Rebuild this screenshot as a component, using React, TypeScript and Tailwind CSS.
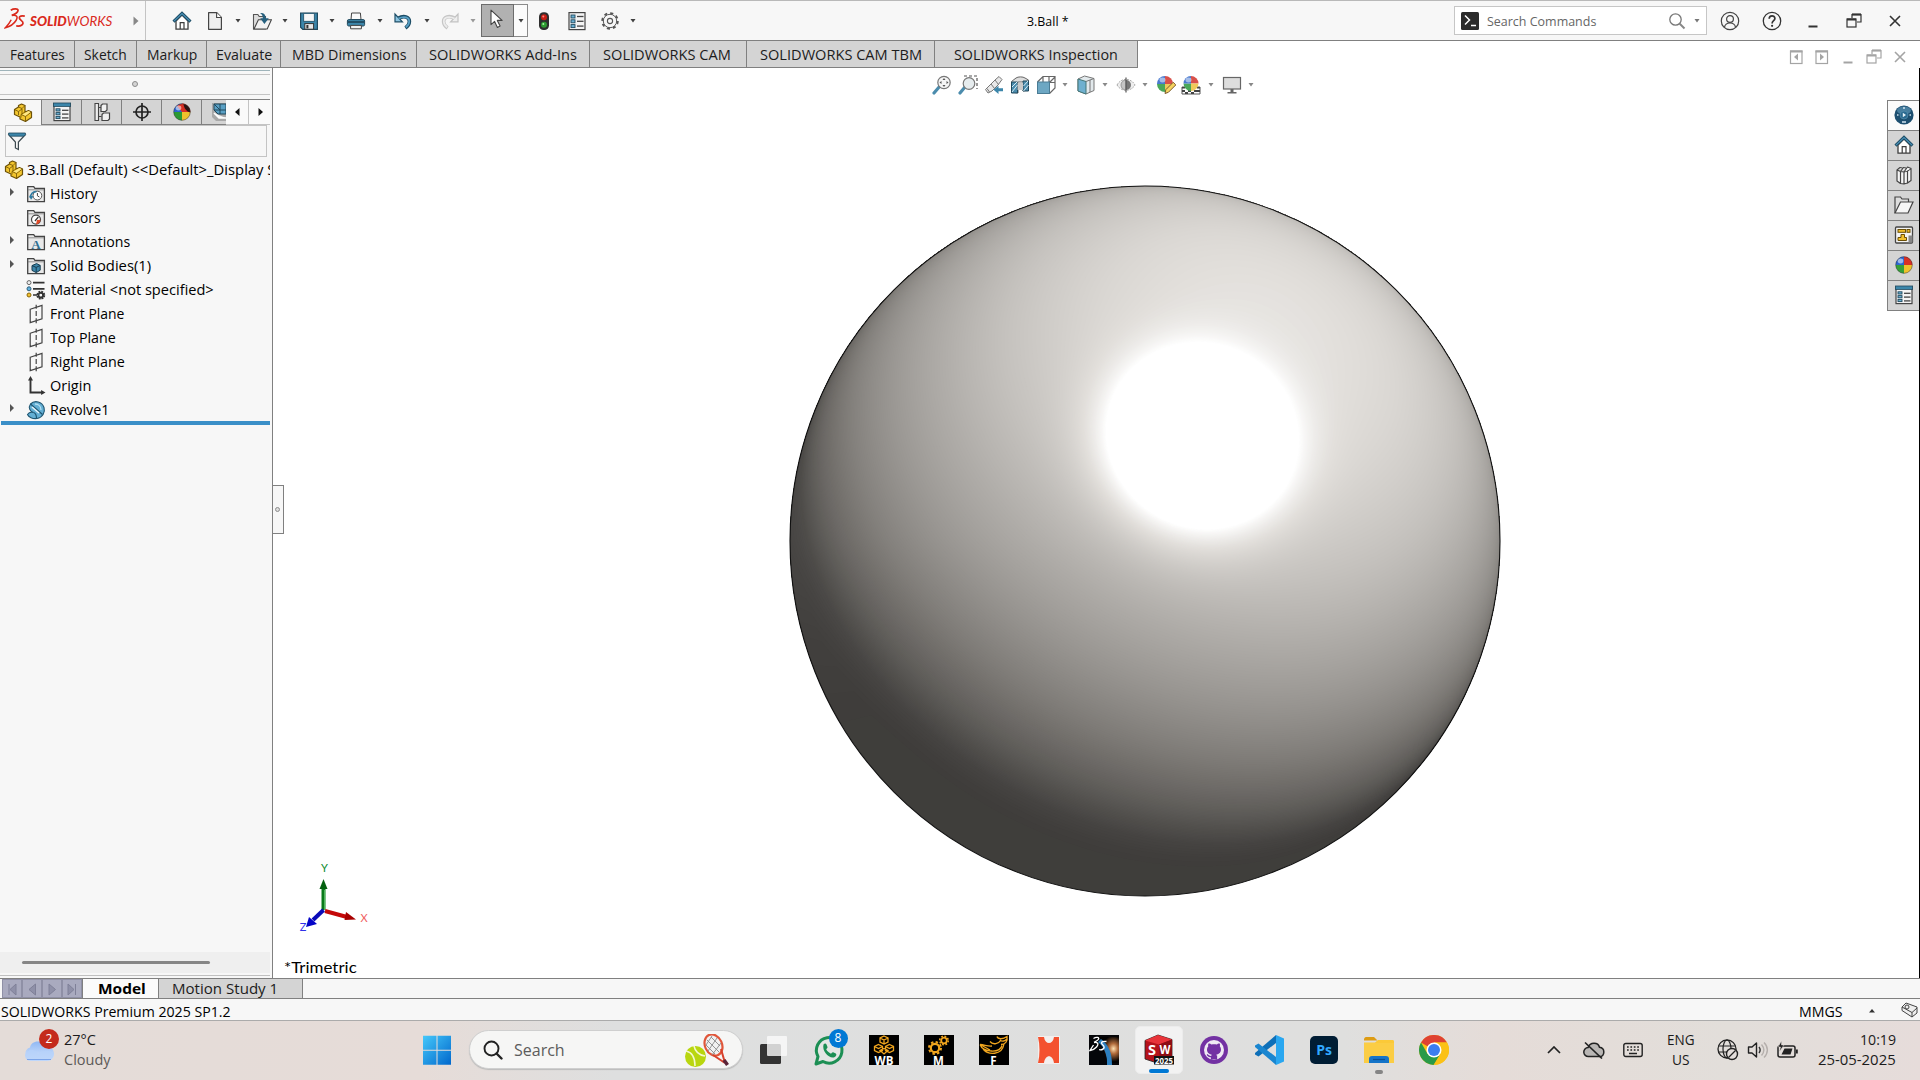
import { useLayoutEffect, useMemo, useRef, useState, type ReactNode } from "react";

/* ---------- text helper: condenses or widens a label to a set width ---------- */
function Label({ w, className = "", children }: { w: number; className?: string; children: ReactNode }) {
  const ref = useRef<HTMLSpanElement>(null);
  const [k, setK] = useState(1);
  useLayoutEffect(() => {
    if (ref.current) setK(w / ref.current.offsetWidth);
  }, [w]);
  return (
    <span className={"block shrink-0 whitespace-nowrap " + className} style={{ width: w }}>
      <span ref={ref} className="inline-block origin-left" style={{ transform: `scaleX(${k})` }}>
        {children}
      </span>
    </span>
  );
}

function Svg({ w = 20, h = 20, className = "", children }: { w?: number; h?: number; className?: string; children: ReactNode }) {
  return (
    <svg width={w} height={h} viewBox={`0 0 ${w} ${h}`} fill="none" className={"shrink-0 " + className}>
      {children}
    </svg>
  );
}

const Caret = ({ color = "#404040" }: { color?: string }) => (
  <Svg w={6} h={4}><path d="M.5 0h5L3 3.4z" fill={color} /></Svg>
);

/* ---------- shaded sphere ---------- */
const R = 355;
/* diffuse response against the cosine between normal and key light */
const RESPONSE: [number, number][] = [
  [-1, 0], [-0.24, 0], [-0.15, 3], [-0.08, 8], [0, 20], [0.1, 37], [0.27, 64], [0.44, 89], [0.6, 112], [0.744, 134], [0.9, 156], [1, 168],
];
function diffuse(c: number) {
  for (let i = 1; i < RESPONSE.length; i++) {
    const [x1, y1] = RESPONSE[i];
    if (c <= x1) {
      const [x0, y0] = RESPONSE[i - 1];
      return y0 + ((c - x0) / (x1 - x0)) * (y1 - y0);
    }
  }
  return 168;
}
function brightness(x: number, y: number) {
  const z = Math.sqrt(Math.max(0, 1 - x * x - y * y));
  const rim = Math.max(0, -x - Math.max(0, y));
  const spec = Math.max(0, 0.155 * x - 0.285 * y + 0.946 * z);
  return 62 + diffuse(0.325 * x - 0.584 * y + 0.744 * z) + 10 * rim * rim + 200 * Math.pow(spec, 42);
}
function shade(v: number) {
  const t = Math.min(1, Math.max(0, (255 - v) / 30)) * Math.min(1, v / 120);
  return `rgb(${Math.round(v)},${Math.round(v - 3 * t)},${Math.round(v - 7 * t)})`;
}
function Sphere() {
  const bands = useMemo(() => {
    const cx = 0.155, cy = -0.285, N = 180, S = 300;
    const rays: { x: number; y: number; b: number }[][] = [];
    for (let i = 0; i < N; i++) {
      const a = (i / N) * Math.PI * 2, ux = Math.cos(a), uy = Math.sin(a);
      const p = cx * ux + cy * uy;
      const len = -p + Math.sqrt(p * p + 1 - cx * cx - cy * cy);
      const ray = [];
      let lo = 999;
      for (let j = 0; j <= S; j++) {
        const t = (j / S) * len, x = cx + ux * t, y = cy + uy * t;
        lo = Math.min(lo, brightness(x, y));
        ray.push({ x, y, b: lo });
      }
      rays.push(ray);
    }
    const out: { d: string; c: string }[] = [];
    for (let v = 63; v <= 255; v += 1) {
      const pts = rays.map((ray) => {
        let j = ray.findIndex((q) => q.b < v);
        if (j < 0) return [ray[S].x * 1.01, ray[S].y * 1.01];
        if (j === 0) j = 1;
        const a = ray[j - 1], b = ray[j];
        const f = a.b === b.b ? 0 : Math.min(1, Math.max(0, (a.b - v) / (a.b - b.b)));
        return [a.x + (b.x - a.x) * f, a.y + (b.y - a.y) * f];
      });
      out.push({ d: "M" + pts.map(([x, y]) => `${(356 + x * R).toFixed(1)} ${(356 + y * R).toFixed(1)}`).join("L") + "Z", c: shade(v) });
    }
    return out;
  }, []);
  return (
    <Svg w={712} h={712}>
      <clipPath id="ball"><circle cx="356" cy="356" r="355" /></clipPath>
      <g clipPath="url(#ball)">
        <rect width="712" height="712" fill="#3f3e3b" />
        {bands.map((b, i) => <path key={i} d={b.d} fill={b.c} />)}
      </g>
      <circle cx="356" cy="356" r="355" stroke="#111" strokeWidth="1.1" />
    </Svg>
  );
}

/* ---------- icons ---------- */
const HomeIcon = () => (
  <Svg>
    <path d="M4 10v8.2h12V10L10 4z" fill="#fff" stroke="#3d3d3d" strokeWidth="1.3" />
    <path d="M8.2 18v-6.3h3.8V18" stroke="#3d3d3d" strokeWidth="1.2" />
    <path d="M1.500 10.600 10 2.400l8.500 8.200" stroke="#1d4d66" strokeWidth="3" />
    <path d="M2 10.200 10 2.600l8 7.600" stroke="#4b92b8" strokeWidth="1.100" />
  </Svg>
);
const NewIcon = () => (
  <Svg><path d="M3.600 1.700h8.200l4.600 4.600v12H3.600z" fill="#efefef" stroke="#444" strokeWidth="1.200" strokeLinejoin="round" /><path d="M11.600 1.800v4.700h4.700" fill="#fff" stroke="#444" strokeWidth="1.100" /></Svg>
);
const OpenIcon = () => (
  <Svg>
    <path d="M1.500 18V3.500h4.300l1.400 2h6.300V18z" fill="#dcdcdc" stroke="#555" strokeWidth="1.100" />
    <path d="M2 18 6.400 8.800h13L15.200 18z" fill="#f2f2f2" stroke="#444" strokeWidth="1.100" />
    <path d="M8 2c3.300-.6 5.600 1 5.800 5.200h3L12.400 13 8.200 7.200h2.600C11 5 10 3.400 8 2z" fill="#27617f" />
  </Svg>
);
const SaveIcon = () => (
  <Svg>
    <path d="M1.600 2h16.800v16.400H3.800l-2.200-2.200z" fill="#3c86aa" stroke="#20485c" strokeWidth="1.200" />
    <rect x="4.600" y="2.400" width="10.800" height="8" fill="#f7f7f7" stroke="#2e5e76" />
    <rect x="5.800" y="12.600" width="8.800" height="5.600" fill="#e8e8e8" stroke="#333" />
    <rect x="7.400" y="14" width="2" height="3.400" fill="#333" />
  </Svg>
);
const PrintIcon = () => (
  <Svg>
    <path d="M5 8.600 5.600 2h8.800L15 8.600z" fill="#fafafa" stroke="#444" />
    <rect x="1.400" y="8.600" width="17.200" height="6.400" rx="1.400" fill="#3c86aa" stroke="#20485c" />
    <path d="M2 11h16" stroke="#17394a" strokeWidth="1.400" />
    <path d="M4.600 14.400h10.800v3.400H4.600z" fill="#f2f2f2" stroke="#444" />
  </Svg>
);
const UndoIcon = () => (
  <Svg>
    <path d="M5 7.400c6-3.400 11.600-1.600 11.400 3.400-.1 2.600-1.600 4.600-4 6.200" stroke="#1d4d66" strokeWidth="3.600" />
    <path d="M2 3v7.800h7.400z" fill="#8cc4e0" stroke="#1d4d66" strokeWidth="1.200" />
    <path d="M5.400 7.600c5.600-3 11-1.400 10.800 3 0 2.200-1.400 4.200-3.400 5.600" stroke="#58a0c6" strokeWidth="1.700" />
  </Svg>
);
const RedoIcon = () => (
  <Svg>
    <path d="M15 7.400C9 4 3.400 5.800 3.600 10.800c.1 2.600 1.600 4.600 4 6.200" stroke="#c6c6c6" strokeWidth="3.600" />
    <path d="M18 3v7.800h-7.400z" fill="#eee" stroke="#c2c2c2" strokeWidth="1.200" />
    <path d="M14.600 7.600c-5.600-3-11-1.400-10.800 3 0 2.200 1.400 4.200 3.400 5.600" stroke="#ececec" strokeWidth="1.700" />
  </Svg>
);
const CursorIcon = () => (
  <Svg><path d="M5 1.200v14.400l3.600-3.200 2.800 6 2.700-1.300-2.800-5.700h4.800z" fill="#fff" stroke="#444" strokeWidth="1.100" strokeLinejoin="round" /></Svg>
);
const TrafficIcon = () => (
  <Svg>
    <rect x="5" y="1.200" width="10" height="17.800" rx="4.600" fill="#2e2e2e" />
    <circle cx="10" cy="6.200" r="3" fill="#c81e14" /><circle cx="9.300" cy="5.400" r="1" fill="#ff8a80" />
    <circle cx="10" cy="13.800" r="3" fill="#2c9a30" /><circle cx="9.300" cy="13" r="1" fill="#a6efa0" />
  </Svg>
);
const ListIcon = ({ header = false }: { header?: boolean }) => (
  <Svg>
    <rect x="2" y="1.600" width="16" height="17" fill="#f4f4f4" stroke="#444" strokeWidth="1.200" />
    {header && <rect x="1.400" y="1" width="17.200" height="3.400" fill="#3c86aa" stroke="#20485c" strokeWidth=".8" />}
    {(header ? [6.800, 10.600, 14.400] : [4, 8.800, 13.600]).map((y) => (
      <g key={y}>
        <rect x="4" y={y} width="4" height={header ? 2.200 : 3} fill="#6bb1d4" stroke="#20485c" strokeWidth=".9" />
        <path d={`M10 ${y + 1.500}h6.500`} stroke="#444" strokeWidth="1.300" />
      </g>
    ))}
  </Svg>
);
const GearIcon = () => (
  <Svg>
    <circle cx="10" cy="10" r="7.800" stroke="#555" strokeWidth="1.900" strokeDasharray="3.100 3.020" />
    <circle cx="10" cy="10" r="6.700" fill="#f7f7f7" stroke="#555" strokeWidth="1" />
    <circle cx="10" cy="10" r="2.600" stroke="#555" strokeWidth="1.100" />
  </Svg>
);
const PartIcon = () => (
  <Svg>
    <path d="M1.500 6.500 5.500 4V2.500L8.500 1 12 2.500V9l3.500-1.500L18.500 9v5.500L12.500 18.500 7 16v-2L1.500 11.500z" fill="#f3c62f" stroke="#6d5208" strokeWidth="1.200" strokeLinejoin="round" />
    <path d="M12 9 8 11.500v3M8 11.500l4.500 2v4.500M12.500 13.500l6-4.500M1.500 6.500 5.500 8.500V12M5.500 8.500 9 6M5.500 4 9 5.500V11M9 5.500l3-3" stroke="#7d5e08" strokeWidth=".9" />
    <path d="M9.500 11.500 15.500 8l2 1-5 3.700z" fill="#fde88a" />
  </Svg>
);
const ConfigIcon = () => (
  <Svg>
    <path d="M3 1.500h3.500v17H3z" fill="#eee" stroke="#444" strokeWidth="1.100" />
    <path d="M6.500 5.500h3M6.500 14.500h3" stroke="#444" strokeWidth="1.200" />
    <path d="M9 3.500 10.500 2h4.500v6l-1.500 1.500H9z" fill="#f2f2f2" stroke="#444" strokeWidth="1.200" />
    <path d="M10 12.500l1.500-1.500h6v6L16 18.500h-6z" fill="#f2f2f2" stroke="#444" strokeWidth="1.200" />
  </Svg>
);
const TargetIcon = () => (
  <Svg><circle cx="10" cy="10" r="6" stroke="#222" strokeWidth="1.700" /><path d="M10 1v18M1 10h18" stroke="#222" strokeWidth="1.700" /></Svg>
);
const BallIcon = ({ dark = false }: { dark?: boolean }) => (
  <Svg>
    <path d="M10 10V1.600A8.400 8.400 0 0 1 18.400 10z" fill="#d83025" />
    <path d="M10 10h8.400A8.400 8.400 0 0 1 10 18.400z" fill="#efc22c" />
    <path d="M10 10v8.400A8.400 8.400 0 0 1 1.600 10z" fill={dark ? "#2c9a34" : "#36a038"} />
    <path d="M10 10H1.600A8.400 8.400 0 0 1 10 1.600z" fill="#2d66d0" />
    {dark && <><path d="M10 10 5 4a8.400 8.400 0 0 1 7-2.200z" fill="#d83025" /><path d="M11.500 2c4.500 1 7 4 6.800 8.500C14.500 9.500 12 6.500 11.500 2z" fill="#2a1414" /></>}
    <ellipse cx="6.500" cy="6" rx="2.800" ry="2.400" fill="#fff" opacity=".55" />
    <circle cx="10" cy="10" r="8.300" stroke="#3339" strokeWidth=".8" />
  </Svg>
);
const DimIcon = () => (
  <Svg w={14}>
    <path d="M0 1h14v18H4L0 15z" fill="#a8a8a8" />
    <path d="M2 2h12v10H6L2 8z" fill="#5aa0c4" stroke="#20485c" />
    <path d="m2 2 6 6h6M8 2v10M2 8h6" stroke="#20485c" />
    <path d="m2 11 5 5h7" fill="#f4f4f4" stroke="#fff" strokeWidth="1.500" />
  </Svg>
);
const FunnelIcon = () => (
  <Svg>
    <path d="m2 4 6.400 7v6l3 1.500V11L18 4z" fill="#f4f4f4" stroke="#3d4a50" strokeWidth="1.200" />
    <path d="M1.600 2h16.800v1.800l-1.400 1.400H3L1.600 3.800z" fill="#3c86aa" stroke="#20485c" strokeWidth=".8" />
  </Svg>
);
const Folder = ({ children }: { children: ReactNode }) => (
  <Svg>
    <path d="M1.700 17.600V2.600h6l1.200 1.800h9.500v13.200z" fill="#e9e9e9" stroke="#444" strokeWidth="1.300" />
    <path d="M2 5.800h16" stroke="#777" strokeWidth=".8" />
    {children}
  </Svg>
);
const HistoryIcon = () => (
  <Folder><circle cx="11.400" cy="11.600" r="4.400" fill="#fff" stroke="#555" /><path d="M11.400 9v2.800l2 1.200" stroke="#444" /><path d="M4.400 14c0-4 2.400-6.500 6-6.300" stroke="#2f7aa0" strokeWidth="1.700" /><path d="m3 11.800 4.500.4-2.500 3.600z" fill="#2f7aa0" /></Folder>
);
const SensorIcon = () => (
  <Folder><circle cx="10" cy="11.600" r="4.500" fill="#fff" stroke="#444" strokeWidth="1.200" /><path d="m9 13 3.300-4" stroke="#333" strokeWidth="1.200" /><path d="M10 16.200a4.500 4.500 0 0 0 4.500-4.500L11 12z" fill="#e04a28" /></Folder>
);
const AnnotIcon = () => (
  <Folder><text x="10" y="16.500" textAnchor="middle" fontSize="13" fontWeight="700" fontFamily="Liberation Serif, serif" fill="#2f6f92">A</text></Folder>
);
const SolidIcon = () => (
  <Folder><path d="m6 9.600 4.600-2 3.600 1.800v4.800l-4 2.400L6 14.400z" fill="#3c86aa" stroke="#173c50" /><path d="m6 9.600 4.200 1.800 4-2M10.200 11.400v5" stroke="#173c50" /></Folder>
);
const MaterialIcon = () => (
  <Svg>
    <circle cx="3" cy="2.600" r="2" fill="#eee" stroke="#666" /><circle cx="3" cy="8.800" r="2" fill="#62b0dc" stroke="#2a5d7c" /><circle cx="3" cy="15" r="2" fill="#f2c12e" stroke="#8a6608" />
    <path d="M7 2.600h11.500M7 8.800h11.500M7 15h4" stroke="#333" strokeWidth="1.700" />
    <circle cx="14.800" cy="15.200" r="3.200" stroke="#333" strokeWidth="2.400" strokeDasharray="1.700 .81" /><circle cx="14.800" cy="15.200" r="2.300" stroke="#333" strokeWidth="1.800" />
  </Svg>
);
const PlaneIcon = () => (
  <Svg><path d="M4.200 5.200 16 1.400v13.400L4.200 18.600z" stroke="#444" strokeWidth="1.200" /><path d="M10.200.800v4M10.200 7v5M10.200 14.200v5" stroke="#444" strokeWidth="1.200" /></Svg>
);
const OriginIcon = () => (
  <Svg><path d="M4.500 3v13.500H17" stroke="#333" strokeWidth="1.900" /><path d="M4.500 0 7 4.400H2zM19.500 16.500l-4.400 2.500v-5z" fill="#333" /></Svg>
);
const RevolveIcon = () => (
  <Svg>
    <path d="M4.500 4C9-.5 16 2 18 7.500c1.500 5-1.500 10-7 11-4.500.6-8.500-1.500-9.500-4 1.500-2.200 4-2.500 6-2C4 11.500 2 7.500 4.500 4z" fill="#63afd4" stroke="#1f5672" strokeWidth="1.100" />
    <path d="M4.500 4 16.500 14.500M7.500 12.500c2 .5 3 2 3 6" stroke="#1f5672" strokeWidth="1.200" /><path d="m6 7 7 6" stroke="#e8f5fb" strokeWidth="1.500" /><path d="M9 4c3.500 0 6 2.500 6 6" stroke="#b5dff2" strokeWidth="1.300" />
  </Svg>
);
const UserIcon = () => (
  <Svg><circle cx="10" cy="10" r="8.700" stroke="#444" strokeWidth="1.200" /><circle cx="10" cy="8" r="3.400" stroke="#444" strokeWidth="1.200" /><path d="M4.500 16.200c.5-3 2.500-4.200 5.500-4.200s5 1.200 5.500 4.200" stroke="#444" strokeWidth="1.200" /></Svg>
);
const HelpIcon = () => (
  <Svg><circle cx="10" cy="10" r="8.700" stroke="#333" strokeWidth="1.300" /><path d="M7.200 7.800c0-4 5.700-3.700 5.700-.4 0 2.300-2.800 2.300-2.800 5" stroke="#333" strokeWidth="1.700" /><circle cx="10.100" cy="14.800" r="1.100" fill="#333" /></Svg>
);
const MinIcon = ({ c = "#333" }: { c?: string }) => <Svg><path d="M5.500 15.500h9" stroke={c} strokeWidth="2" /></Svg>;
const RestoreIcon = ({ c = "#333" }: { c?: string }) => (
  <Svg><path d="M8 7V3.500h9V11h-4" stroke={c} strokeWidth="1.200" /><path d="M8 3.500h9" stroke={c} strokeWidth="2.200" /><rect x="3" y="8" width="9" height="8" stroke={c} strokeWidth="1.200" /><path d="M3 8.500h9" stroke={c} strokeWidth="2" /></Svg>
);
const CloseIcon = ({ c = "#333" }: { c?: string }) => <Svg><path d="m5 5 10 10M15 5 5 15" stroke={c} strokeWidth="1.600" /></Svg>;
const DockIcon = ({ flip = false }: { flip?: boolean }) => (
  <Svg className={flip ? "-scale-x-100" : ""}><rect x="4.500" y="4" width="11.500" height="12.500" stroke="#a4a4a4" strokeWidth="1.200" /><path d="M4 4.500h12.500" stroke="#a4a4a4" strokeWidth="2" /><path d="M12 6.500v7L8 10z" fill="#a4a4a4" /></Svg>
);

/* heads-up view toolbar */
const ZoomFit = () => (
  <Svg><path d="m2 18 6-7" stroke="#4b8cad" strokeWidth="3.200" strokeLinecap="round" /><circle cx="12" cy="7.500" r="6.200" fill="#f5f5f5" stroke="#777" strokeWidth="1.200" /><path d="M12 3l1.500 2h-3zM12 12l1.500-2h-3zM7.500 7.500l2-1.500v3zM16.500 7.500l-2-1.500v3z" fill="#555" /></Svg>
);
const ZoomArea = () => (
  <Svg><path d="M6 1h13v13" stroke="#555" strokeWidth="1.200" strokeDasharray="3 2" /><path d="m2 18 5-6" stroke="#4b8cad" strokeWidth="3.200" strokeLinecap="round" /><circle cx="11" cy="8.500" r="5.800" fill="#e6ecee" stroke="#777" strokeWidth="1.200" /></Svg>
);
const PrevView = () => (
  <Svg><path d="M1.500 14.500 4 18l4-2 6-6 4-5.500-3-3L11 5z" fill="#e8e8e8" stroke="#777" /><path d="m11 5 3.500 4.500M7 9l3.500 4.500M3 13.500 5.500 17" stroke="#777" /><path d="m9.500 14.800 5-4v2.500H19v3h-4.500V19z" fill="#3c86aa" /></Svg>
);
const SectionView = () => (
  <Svg><path d="M1.500 6.500 6 3c2-1.500 7-1.500 9 0l3.500 2v10L13 16V7H8v11l-6.500-1z" fill="#ddd" stroke="#666" /><path d="M1.500 7H7.500v11H1.500zM13 6h5.500v10H13z" fill="#4b8cad" stroke="#20485c" /><path d="m2 12 5-5M2 17l5.500-7M13.500 11l4.500-5M13.500 16l5-6" stroke="#d7ecf5" /><path d="M7.500 7.500h5.500V15H7.500z" fill="#c9c9c9" /></Svg>
);
const OrientIcon = () => (
  <Svg><path d="M1.500 7 7 1.500h12V13l-5.500 5.500M7 1.500V7M13 1.500V7M19 7.500h-5.500L19 2" stroke="#666" strokeWidth="1.200" /><rect x="1.500" y="7" width="12" height="11.500" fill="#6da7c3" stroke="#4a7c95" /></Svg>
);
const DisplayIcon = () => (
  <Svg><path d="M2 4 8.500 1 18 3.500v12L10 19l-8-3z" fill="#e2e9ec" stroke="#777" /><path d="m2 4 8 2.500V19l-8-3z" fill="#6fb0cf" stroke="#477" /><path d="m10 6.500 8-3M14 5v12" stroke="#777" /></Svg>
);
const EyeIcon = () => (
  <Svg><path d="M1 10c4-7.500 14-7.500 18 0-4 7-14 7-18 0z" fill="#eee" stroke="#aaa" strokeDasharray="2 1" /><path d="M5 10a5 5 0 0 1 5-5v10a5 5 0 0 1-5-5z" fill="#c5c5c5" stroke="#999" /><path d="M15 10a5 5 0 0 1-5 5V5a5 5 0 0 1 5 5z" fill="#777" /><path d="M10 2.500v15" stroke="#555" strokeWidth="1.200" /></Svg>
);
const AppearanceIcon = () => (
  <Svg><path d="M9 9V1a8 8 0 0 1 8 8z" fill="#d8504a" /><path d="M9 9h8a8 8 0 0 1-8 8z" fill="#efc95a" /><path d="M9 9v8a8 8 0 0 1-8-8z" fill="#4aa85a" /><path d="M9 9H1a8 8 0 0 1 8-8z" fill="#4a7ad0" /><ellipse cx="6.500" cy="5" rx="3" ry="2.400" fill="#fff" opacity=".5" /><path d="m9 18.500.8-3.800 7.400-7.400 2.600 2.600-7.400 7.400z" fill="#f6d460" stroke="#7a5a2a" /></Svg>
);
const SceneIcon = () => (
  <Svg><path d="M1 12h18v7H1z" fill="#fff" stroke="#555" /><path d="M1 15h3v2H1zM16 15h3v2h-3zM4 17h3v2H4zM10 17h3v2h-3zM7 15h3v2H7zM13 15h3v2h-3zM1 12h3v1.500H1zM16 12h3v1.500h-3z" fill="#444" /><path d="M10 8.500V1a7.500 7.500 0 0 1 7.500 7.500z" fill="#d8504a" /><path d="M10 8.500h7.500A7.500 7.500 0 0 1 10 16z" fill="#efc95a" /><path d="M10 8.500V16a7.500 7.500 0 0 1-7.500-7.500z" fill="#4aa85a" /><path d="M10 8.500H2.500A7.500 7.500 0 0 1 10 1z" fill="#4a7ad0" /><ellipse cx="7.500" cy="5" rx="3" ry="2.400" fill="#fff" opacity=".5" /></Svg>
);
const MonitorIcon = () => (
  <Svg><rect x="1.500" y="2.500" width="17" height="11.500" fill="#ddd" stroke="#666" strokeWidth="1.200" /><path d="M8.500 14h3v3h3v1.500h-9V17h3z" fill="#666" /></Svg>
);

/* task pane */
const CompassIcon = () => (
  <Svg><circle cx="10" cy="10" r="9.600" fill="#1d4f70" /><ellipse cx="10" cy="5.500" rx="7" ry="4" fill="#5a93b4" opacity=".7" /><circle cx="10" cy="10" r="4" fill="#2b6a90" stroke="#5f95b4" strokeWidth=".6" /><path d="M8.800 7.800v4.400l3.200-2.200z" fill="#e8f3f8" /><path d="M8 17h4M3 10h1.500M15.500 10H17M9 3h2" stroke="#cfe4ef" strokeWidth="1.300" /></Svg>
);
const BooksIcon = () => (
  <Svg>
    <path d="M3 5 6.500 6.500V18.500L3 16zM6.500 6.500 10 7v12l-3.500-.5zM10 7l3.500-1v12L10 19zM13.500 6 17 3.500v12L13.500 18z" fill="#f6f6f6" stroke="#444" strokeWidth="1.200" strokeLinejoin="round" />
    <path d="M3 5 6 2.500l2.500.5M6.500 6.500 9.500 2.500l2.500.5M10 7l3.500-5 3.500 1.500" fill="#fff" stroke="#444" strokeWidth="1.200" strokeLinejoin="round" />
  </Svg>
);
const FolderOpen = () => (
  <Svg><path d="M1 18V2h5.500l1.500 2h6.500v3" fill="#ddd" stroke="#444" strokeWidth="1.200" /><path d="M1 18 6.500 7H19l-5 11z" fill="#f6f6f6" stroke="#444" strokeWidth="1.200" /></Svg>
);
const PaletteIcon = () => (
  <Svg><rect x="1.500" y="2" width="17" height="16" rx="1" fill="#f4f4f4" stroke="#444" strokeWidth="1.300" /><rect x="4" y="4.500" width="7.500" height="2.800" fill="#f2c12e" stroke="#6b4f05" /><rect x="13" y="4.500" width="3" height="2.800" fill="#f2c12e" stroke="#6b4f05" /><path d="M4 15.500v-3h3V9.500h3.500v3h2v3z" fill="#f2c12e" stroke="#6b4f05" /><path d="M14.500 17.500v-7h4v7z" fill="#888" /></Svg>
);

/* ---------- title bar ---------- */
function BrandLogo() {
  return (
    <Svg w={22} h={22}>
      <path d="M6.800 2.200C9.500.4 14.300.3 14 2.600c-.3 2-3.200 3.600-6.200 4.700" stroke="#da291c" strokeWidth="1.700" />
      <path d="M7.800 7.500c4.800-.9 6.600 1 4.200 5-1.800 3-5.600 5.800-10.600 7.200 2.400-2.600 4.500-5.200 5.800-8" stroke="#da291c" strokeWidth="1.500" />
      <path d="M20.800 8.200c-3.300-.7-5.600 0-5.500 1.700.1 2.200 4.300 3 3.700 5.400-.5 2-3.500 3-6.800 2.600" stroke="#da291c" strokeWidth="1.700" />
    </Svg>
  );
}
const Cell = ({ w, children }: { w: string; children?: ReactNode }) => (
  <div className={"flex h-full shrink-0 items-center justify-center " + w}>{children}</div>
);

function TitleBar() {
  return (
    <header className="flex h-[41px] shrink-0 items-center border-t border-b border-t-[#b9b9b9] border-b-[#808080] bg-[#f7f7f7]">
      <div className="flex h-full w-[146px] items-center border-r border-[#c4c4c4] pl-[4px]">
        <div className="-mt-[4px]"><BrandLogo /></div>
        <Label w={82} className="ml-[4px] font-['Lato'] text-[14px] leading-5 italic text-[#da291c]">
          <b className="font-black">SOLID</b>WORKS
        </Label>
        <Svg w={6} h={10} className="ml-[21px]"><path d="M.500.500v9L5.500 5z" fill="#888" /></Svg>
      </div>
      <Cell w="ml-5 w-8"><HomeIcon /></Cell>
      <Cell w="w-[34px]"><NewIcon /></Cell>
      <Cell w="w-3"><Caret /></Cell>
      <Cell w="w-9"><OpenIcon /></Cell>
      <Cell w="w-2.5"><Caret /></Cell>
      <Cell w="w-[38px]"><SaveIcon /></Cell>
      <Cell w="w-2"><Caret /></Cell>
      <Cell w="w-10"><PrintIcon /></Cell>
      <Cell w="w-2"><Caret /></Cell>
      <Cell w="w-[38px]"><UndoIcon /></Cell>
      <Cell w="w-2.5"><Caret /></Cell>
      <Cell w="w-9"><RedoIcon /></Cell>
      <Cell w="w-2.5"><Caret color="#999" /></Cell>
      <div className="ml-[3px] flex h-[33px]">
        <div className="flex w-[33px] items-center justify-center border border-[#6c6c6c] bg-[#b1b1b1] pr-1 pb-1"><CursorIcon /></div>
        <div className="flex w-[14px] items-center justify-center border border-l-0 border-[#8a8a8a] bg-[#fbfbfb]"><Caret /></div>
      </div>
      <Cell w="w-8"><TrafficIcon /></Cell>
      <Cell w="w-[34px]"><ListIcon /></Cell>
      <Cell w="w-8"><GearIcon /></Cell>
      <Cell w="w-[14px]"><Caret /></Cell>
      <Label w={42} className="ml-[387px] text-[13px] leading-5 text-black">3.Ball *</Label>
      <div className="ml-auto flex h-[29px] w-[253px] items-center border border-[#c6c6c6] bg-white pl-[6px]">
        <Svg w={18} h={18}><rect width="18" height="18" rx="1.500" fill="#2b2b2b" /><path d="m4 3.500 4.500 4.500L4 12.500M10 13.500h5" stroke="#fff" strokeWidth="1.500" /></Svg>
        <Label w={109} className="ml-[8px] text-[13.5px] leading-5 text-[#666]">Search Commands</Label>
        <Svg w={18} h={18} className="ml-[72px]"><circle cx="7.500" cy="7.500" r="5.700" stroke="#777" strokeWidth="1.300" /><path d="m11.500 11.500 5 5" stroke="#888" strokeWidth="2" /></Svg>
        <div className="ml-[8px]"><Caret color="#777" /></div>
      </div>
      <Cell w="w-[46px]"><UserIcon /></Cell>
      <Cell w="w-[37px]"><HelpIcon /></Cell>
      <Cell w="w-[45px]"><MinIcon /></Cell>
      <Cell w="w-[37px]"><RestoreIcon /></Cell>
      <Cell w="mr-[2px] w-[46px]"><CloseIcon /></Cell>
    </header>
  );
}

const RIBBON: [string, number, string][] = [
  ["Features", 55, "w-[75px]"],
  ["Sketch", 43, "w-[62px]"],
  ["Markup", 50, "w-[70px]"],
  ["Evaluate", 56, "w-[74px]"],
  ["MBD Dimensions", 114, "w-[136px]"],
  ["SOLIDWORKS Add-Ins", 148, "w-[173px]"],
  ["SOLIDWORKS CAM", 128, "w-[157px] pr-[3px]"],
  ["SOLIDWORKS CAM TBM", 162, "w-[188px]"],
  ["SOLIDWORKS Inspection", 164, "w-[203px]"],
];
function Ribbon() {
  return (
    <nav className="flex h-[27px] shrink-0 items-center bg-white">
      {RIBBON.map(([t, w, cls]) => (
        <div key={t} className={"flex h-full shrink-0 items-center justify-center border-r border-b border-[#808080] bg-[#d4d4d4] pt-px " + cls}>
          <Label w={w} className="text-[14.5px] leading-5 text-[#1c1c1c]">{t}</Label>
        </div>
      ))}
      <div className="mt-[4px] ml-auto flex gap-[6px] pr-[10px]">
        <DockIcon /><DockIcon flip /><MinIcon c="#a4a4a4" /><RestoreIcon c="#a4a4a4" /><CloseIcon c="#a4a4a4" />
      </div>
    </nav>
  );
}

/* ---------- feature manager ---------- */
const TREE: [string, number, () => ReactNode, boolean][] = [
  ["History", 47, HistoryIcon, true],
  ["Sensors", 50, SensorIcon, false],
  ["Annotations", 80, AnnotIcon, true],
  ["Solid Bodies(1)", 101, SolidIcon, true],
  ["Material <not specified>", 164, MaterialIcon, false],
  ["Front Plane", 74, PlaneIcon, false],
  ["Top Plane", 66, PlaneIcon, false],
  ["Right Plane", 75, PlaneIcon, false],
  ["Origin", 41, OriginIcon, false],
  ["Revolve1", 59, RevolveIcon, true],
];
function FeatureTree() {
  const tabs = [<ListIcon key="l" header />, <ConfigIcon key="c" />, <TargetIcon key="t" />, <BallIcon key="b" dark />];
  return (
    <aside className="flex w-[273px] shrink-0 flex-col border-r border-[#808080] bg-[#f7f7f7] pr-[2px]">
      <div className="mt-[2px] h-px shrink-0 bg-[#9fb4ba]" />
      <div className="mt-[3px] flex h-[21px] shrink-0 items-center justify-center border-t border-b border-[#c4c4c4]">
        <div className="mb-[2px] h-[6px] w-[6px] rounded-full border border-[#8c8c8c] bg-[#d4d4d4]" />
      </div>
      <div className="mt-[4px] flex h-[26px] shrink-0 border-t border-[#808080]">
        <div className="flex w-[41px] items-center justify-center pl-[4px]"><PartIcon /></div>
        {tabs.map((t, i) => (
          <div key={i} className="flex w-10 items-center justify-center border-b border-l border-[#808080] bg-[#d4d4d4]">{t}</div>
        ))}
        <div className="flex w-[25px] items-center justify-end border-b border-l border-[#808080] bg-[#d4d4d4]"><DimIcon /></div>
        <div className="flex w-[23px] items-center justify-center border-r border-b border-[#c4c4c4] bg-[#fafafa]"><Svg w={5} h={8}><path d="M4.500 0v8L0 4z" fill="#111" /></Svg></div>
        <div className="flex flex-1 items-center justify-center border-b border-[#c4c4c4] bg-[#fafafa] pl-px"><Svg w={5} h={8}><path d="M.500 0v8L5 4z" fill="#111" /></Svg></div>
      </div>
      <div className="mr-[3px] ml-[5px] flex h-[32px] shrink-0 items-center border border-[#c4c4c4] pl-px"><FunnelIcon /></div>
      <div className="mt-px flex h-6 shrink-0 items-center overflow-hidden pl-[4px]">
        <div className="shrink-0"><PartIcon /></div>
        <Label w={248} className="ml-[3px] text-[14.5px] leading-6 text-black">3.Ball (Default) &lt;&lt;Default&gt;_Display S</Label>
      </div>
      {TREE.map(([t, w, Icon, open]) => (
        <div key={t} className="flex h-6 shrink-0 items-center pl-[9px]">
          <Svg w={6} h={8} className="mr-[11px] mb-1">{open && <path d="M1 0v8l4-4z" fill="#555" />}</Svg>
          <Icon />
          <Label w={w} className="ml-[4px] text-[14.5px] leading-6 text-black">{t}</Label>
        </div>
      ))}
      <div className="-mt-px ml-px h-[4px] shrink-0 bg-[#3a8fc8]" />
      <div className="flex-1" />
      <div className="flex h-[21px] shrink-0 items-center bg-[#efefef] pl-[22px]"><div className="h-[3px] w-[188px] rounded-full bg-[#868686]" /></div>
      <div className="mt-[2px] mb-[2px] h-px shrink-0 bg-[#c0c0c0]" />
    </aside>
  );
}

/* ---------- viewport ---------- */
function Viewport() {
  const tools: [ReactNode, string][] = [
    [<ZoomFit />, "w-[26px]"], [<ZoomArea />, "w-[26px]"], [<PrevView />, "w-[26px]"], [<SectionView />, "w-[26px]"], [<OrientIcon />, "w-[26px]"],
    [<Caret color="#888" />, "w-[12px]"], [<DisplayIcon />, "w-[29px]"], [<Caret color="#888" />, "w-[10px]"], [<EyeIcon />, "w-[31px]"],
    [<Caret color="#888" />, "w-[8px]"], [<AppearanceIcon />, "w-[34px]"], [<SceneIcon />, "w-[16px]"], [<Caret color="#888" />, "w-[24px]"],
    [<MonitorIcon />, "w-[18px]"], [<Caret color="#888" />, "w-[20px]"],
  ];
  const pane = [<CompassIcon />, <HomeIcon />, <BooksIcon />, <FolderOpen />, <PaletteIcon />, <BallIcon />, <ListIcon header />];
  return (
    <main className="relative flex-1 overflow-hidden border-r border-black bg-white">
      <div className="flex h-[34px] items-center pl-[656px]">
        {tools.map(([icon, w], i) => <Cell key={i} w={w}>{icon}</Cell>)}
      </div>
      <div className="absolute top-[417px] left-0 flex h-[49px] w-[11px] items-center justify-center border border-l-0 border-[#808080] bg-[#f7f7f7] pr-px">
        <div className="h-[5px] w-[5px] rounded-full border border-[#8c8c8c] bg-[#ddd]" />
      </div>
      <div className="absolute top-[117px] left-[516px]"><Sphere /></div>
      <div className="absolute top-[791px] left-[19px]">
        <Svg w={85} h={80}>
          <path d="M31.500 51V30" stroke="#0a7a1a" strokeWidth="4" /><path d="M32.800 51V31" stroke="#6fd07c" strokeWidth="1" />
          <path d="M31.500 20 27.500 30h8z" fill="#046010" />
          <path d="m33 52 22 6" stroke="#c40808" strokeWidth="4" /><path d="m64 60.500-10-7.500-1.500 8z" fill="#a80000" />
          <path d="M31.500 51 21 61" stroke="#0a0ab8" strokeWidth="4" /><path d="m14 68 3-10 8 7z" fill="#0404c8" />
          <text x="32.500" y="13" textAnchor="middle" fontSize="11" fill="#0a8a2a" fontFamily="Lato, sans-serif">Y</text>
          <text x="72" y="62.500" textAnchor="middle" fontSize="11" fill="#f06060" fontFamily="Lato, sans-serif">X</text>
          <text x="11" y="71.500" textAnchor="middle" fontSize="11" fill="#3030e8" fontFamily="Lato, sans-serif">Z</text>
        </Svg>
      </div>
      <div className="absolute top-[887px] left-[11px]">
        <Label w={73} className="font-['Lato'] text-[16px] leading-6 font-normal text-black">*Trimetric</Label>
      </div>
      <div className="absolute top-[32px] right-0 flex w-[32px] flex-col border-t border-l border-[#808080]">
        {pane.map((p, i) => (
          <div key={i} className={"flex h-[30px] items-center justify-center border-b border-[#808080] pb-[2px] " + (i === 0 ? "bg-[#fbfbfb]" : "bg-[#d4d4d4]")}>{p}</div>
        ))}
      </div>
    </main>
  );
}

/* ---------- bottom bars ---------- */
function BottomTabs() {
  const nav = ["M6 4v11M13 4v11L7 9.500z", "M12.500 4v11L6 9.500z", "M6 4v11l6.500-5.500z", "M5 4v11l6-5.500zM12.500 4v11"];
  return (
    <div className="flex h-[21px] shrink-0 border-t border-b border-[#808080] bg-[#f7f7f7]">
      <div className="ml-[2px] flex w-[81px] border-r border-[#808080] bg-[#a9aabf]">
        {nav.map((d) => (
          <div key={d} className="flex w-5 items-center justify-center border border-[#8f90a6]"><Svg w={18} h={18}><path d={d} fill="#8f90a8" stroke="#7f8098" /></Svg></div>
        ))}
      </div>
      <div className="flex w-[75px] items-center justify-center bg-[#fbfbfb] pl-[2px]">
        <Label w={48} className="text-[14.5px] leading-5 font-bold text-black">Model</Label>
      </div>
      <div className="flex w-[145px] items-center border-r border-l border-[#808080] bg-[#d4d4d4] pl-[13px]">
        <Label w={106} className="text-[14.5px] leading-5 text-[#1c1c1c]">Motion Study 1</Label>
      </div>
    </div>
  );
}
function StatusBar() {
  return (
    <div className="flex h-[22px] shrink-0 items-center overflow-hidden border-b border-[#ababab] bg-[#f7f7f7] pt-[4px] pl-[1px] text-[14.5px] leading-5 text-black">
      <Label w={230}>SOLIDWORKS Premium 2025 SP1.2</Label>
      <Label w={44} className="ml-auto">MMGS</Label>
      <Svg w={6} h={4} className="mr-[26px] mb-[2px] ml-[26px]"><path d="M0 3.500h6L3 0z" fill="#333" /></Svg>
      <Svg w={17} h={16} className="mr-[2px] mb-1"><path d="m1 5 4-4 11 4v6l-5 4L1 8.500z" fill="#eee" stroke="#444" /><path d="m1 5 10 5.500L16 6M11 10.500V15" stroke="#444" /><circle cx="6" cy="5" r="2" stroke="#444" /></Svg>
    </div>
  );
}

/* ---------- Windows taskbar ---------- */
const BlackTile = ({ label, children }: { label: string; children: ReactNode }) => (
  <Svg w={30} h={30}>
    <rect width="30" height="30" fill="#000" />
    {children}
    <text x={label === "WB" ? 15 : 14.500} y="29.800" textAnchor="middle" fontSize="11.500" fontWeight="700" fill="#fff" fontFamily="Open Sans, sans-serif">{label}</text>
  </Svg>
);
const WeatherIcon = () => (
  <Svg w={34} h={34}>
    <defs><linearGradient id="cl" x1="0" y1="0" x2="0" y2="1"><stop offset="0" stopColor="#8fb8f4" /><stop offset="1" stopColor="#dbe9fd" /></linearGradient></defs>
    <path d="M8 30a7 7 0 0 1-1-13.500C8 9 20 8 22 16c6-1.500 9 2.500 9 7a7 7 0 0 1-7 7z" fill="url(#cl)" />
    <path d="M2 24c3-7 11-6 13-1 4-4 11-4 16-1-.2 5-3 8-7 8H8c-4 0-6-3-6-6z" fill="#b7d2fa" opacity=".8" />
    <path d="M4 28.500h24" stroke="#7ba4e8" />
  </Svg>
);
const Racket = () => (
  <Svg w={46} h={34}>
    <circle cx="11.500" cy="22.500" r="10.500" fill="#b9d60f" /><path d="M2 17c5 1 9 5 9 15M10 12c1 5 5 9 11 10" stroke="#f4f8d0" strokeWidth="1.500" />
    <ellipse cx="29.500" cy="11" rx="8.500" ry="11" transform="rotate(-25 29.500 11)" fill="#f1f1f1" stroke="#e0563a" strokeWidth="2.200" />
    <path d="m23 6 12 12M22 11l9 9M27 3l9 9M24 17l9-13M28 21l9-12M22 11l6-9" stroke="#8a8a8a" strokeWidth=".9" />
    <path d="m29 21 12 8M37 15l4 14" stroke="#d8402c" strokeWidth="2" /><path d="m40 26 3.500 5" stroke="#5a2438" strokeWidth="3.500" />
  </Svg>
);
const WhatsApp = () => (
  <Svg w={34} h={34}>
    <path d="M4 31l2-7.500a12.800 12.800 0 1 1 5 5z" stroke="#1c8f54" strokeWidth="3" strokeLinejoin="round" fill="#e4e6e4" />
    <path d="M11.500 11.500c1-1.500 2.500-1.500 3 0l1 2.500c.2 1-.8 1.500-1.300 2.300 1 2 2.600 3.500 4.800 4.400.8-.6 1.200-1.700 2.200-1.400l2.600 1.300c1.200.8.300 3-1.500 3.700-5.500 1.500-12.500-6-10.800-12.800z" fill="#1c8f54" />
  </Svg>
);
const SolidWorksIcon = () => (
  <Svg w={32} h={32}>
    <path d="M2 6.500 15 1l14 4.500v18L17 30 2 25z" fill="#b5121b" stroke="#222" strokeWidth=".8" />
    <path d="M2 6.500 15 1l14 4.500-13 5z" fill="#e8343a" /><path d="m16 10.500 13-5v18L17 30z" fill="#8c0d14" />
    <text x="9" y="21" textAnchor="middle" fontSize="14.500" fontWeight="700" fill="#fff" fontFamily="Open Sans, sans-serif">S</text>
    <text x="22" y="20" textAnchor="middle" fontSize="13" fontWeight="700" fill="#fff" fontFamily="Open Sans, sans-serif" textLength="11" lengthAdjust="spacingAndGlyphs">W</text>
    <rect x="11" y="22" width="20" height="8.500" fill="#111" />
    <text x="21" y="29.500" textAnchor="middle" fontSize="9" fontWeight="700" fill="#fff" fontFamily="Open Sans, sans-serif" textLength="18" lengthAdjust="spacingAndGlyphs">2025</text>
  </Svg>
);
function Taskbar() {
  const apps: ReactNode[] = [
    <Svg w={30} h={30}><rect x="1" y="9" width="21" height="20" rx="1.500" fill="#333" /><rect x="8" y="1" width="20" height="20" rx="1" fill="#fafafa" opacity=".8" /></Svg>,
    <div className="relative">
      <WhatsApp />
      <div className="absolute -top-[4px] left-[17px] flex h-[19px] w-[19px] items-center justify-center rounded-full bg-[#0078d4] text-[12px] leading-none text-white">8</div>
    </div>,
    <BlackTile label="WB"><path d="m15 1 4 2v4l-4 2-4-2V3zM11 3l4 2 4-2M15 5v4M9.500 9.500l4 2v4l-4 2-4-2v-4zM5.500 11.500l4 2 4-2M20.500 9.500l4 2v4l-4 2-4-2v-4zM16.500 11.500l4 2 4-2M15 13.500l4 2-4 3.500-4-3.500z" stroke="#f0a51e" strokeWidth="1.300" /></BlackTile>,
    <BlackTile label="M"><circle cx="11" cy="13" r="4.200" stroke="#f0a51e" strokeWidth="2.200" /><circle cx="11" cy="13" r="6" stroke="#f0a51e" strokeWidth="2" strokeDasharray="2.400 2.300" /><circle cx="20" cy="5.500" r="2.800" stroke="#f0a51e" strokeWidth="1.800" /><circle cx="20" cy="5.500" r="4.300" stroke="#f0a51e" strokeWidth="1.500" strokeDasharray="1.800 1.570" /></BlackTile>,
    <BlackTile label="F"><path d="M1 9.500c3 8 20 9 22 1M1 9.500c5 .5 8 2 12 1.500M4 14c5 6 19 7 21-5M11 6.500c3 4 9 2 11-1.500M18 1.500c1 3 6 3 10 0 1 5-2 8-6 8M21 5c2 2 5 1 7-1M1 9.500l10 5.500" stroke="#f0a51e" strokeWidth="1.300" /></BlackTile>,
    <Svg w={24} h={28}><rect x="1" y="0" width="22" height="28" fill="#f3efee" /><path d="M1 1h6c1 8 9 8 10 0h5v26h-5c-1-9-9-9-10 0H1c2-8 2-18 0-26z" fill="#f4512f" /></Svg>,
    <Svg w={30} h={30}>
      <defs><radialGradient id="sun" cx=".75" cy=".45" r=".5"><stop offset="0" stopColor="#ffe0b0" /><stop offset=".4" stopColor="#b06a3a" /><stop offset="1" stopColor="#000" /></radialGradient></defs>
      <rect width="30" height="30" fill="#050508" /><rect x="8" y="2" width="22" height="26" fill="url(#sun)" />
      <path d="M12 4c8 6 11 14 11 26h-5c0-12-3-18-9-23z" fill="#2c7fc0" /><path d="M18 30C18 18 13 10 5 6l-5 9v15z" fill="#04060a" />
      <path d="M4.500 3.500c3-2 6-1 5 .8-.6 1.300-2.500 2-4.500 3M5 7.500c4-.6 5 1.500 2.500 4.500-1.500 1.800-3.500 3-6.500 3.500L4.500 10M17.500 6.500c-3.500-.6-5 .3-5 1.600s3 2.400 2.600 4.400c-.4 1.800-2.500 2.500-5 2.200" stroke="#fff" strokeWidth="1.300" />
    </Svg>,
    <div className="relative flex h-12 w-12 items-center justify-center rounded-[5px] border border-[#ececec] bg-[#f2f2f2]">
      <SolidWorksIcon />
      <div className="absolute bottom-0 left-[13px] h-1 w-5 rounded-full bg-[#0078d4]" />
    </div>,
    <Svg w={28} h={28}>
      <circle cx="14" cy="14" r="14" fill="#7331a3" /><circle cx="14" cy="14" r="10" fill="#efe9f3" />
      <path d="M11.500 23.500v-3c-3 .5-3.500-1.500-4.500-2M16.500 23.500v-4" stroke="#7331a3" strokeWidth="1.300" />
      <path d="M8.500 7.500c1-.3 2.300.5 3 1 1.600-.4 3.600-.4 5.200 0 .7-.5 2-1.300 3-1 .5 1.200.3 2.200.1 2.700 2.700 3.500.6 8-3.300 8.300v5h-5v-5c-4-.4-6-4.800-3.200-8.300-.3-.7-.3-1.700.2-2.700z" fill="#7331a3" />
    </Svg>,
    <Svg w={30} h={30}><path d="m22 0 8 3.500v23L22 30z" fill="#2aa7f0" /><path d="M22 0v8L4.500 21.500 1 19.500V18z" fill="#0d6fb8" /><path d="M22 30v-8L4.500 8.500 1 10.500V12z" fill="#1a86d0" /></Svg>,
    <Svg w={28} h={28}><rect width="28" height="28" rx="5" fill="#001d34" /><text x="14" y="19" textAnchor="middle" fontSize="14" fontWeight="700" fill="#31a8ff" fontFamily="Open Sans, sans-serif">Ps</text></Svg>,
    <div className="relative">
      <Svg w={30} h={30}><path d="M0 4.500C0 3 1 2 2 2h8l3.500 3.500H0z" fill="#dd9c14" /><path d="M0 7.500h11L14 5h14.500c1 0 1.500.6 1.500 1.500V28H0z" fill="#fbc938" /><path d="M0 8h30v20H0z" fill="#fcd04c" opacity=".6" /><path d="M5 28v-4c0-1.800 1-3 3-3h14c2 0 3 1.200 3 3v4z" fill="#1574c8" /><path d="M9 24.500h12" stroke="#0a4f94" strokeWidth="1.200" /></Svg>
      <div className="absolute top-[35px] left-[11px] h-1 w-2 rounded-full bg-[#858585]" />
    </div>,
    <Svg w={30} h={30}>
      <circle cx="15" cy="15" r="15" fill="#fbc116" /><path d="M15 15 2 7.500A15 15 0 0 1 28 7.500H15z" fill="#df4232" /><path d="M2 7.500 8.500 18.800 15 22.500l-.5 7.500A15 15 0 0 1 2 7.500z" fill="#2a9a48" /><path d="m21.500 18.800-7 11.200-3-8 4-2z" fill="#2a9a48" /><path d="M21.500 18.700 15 30a15 15 0 0 0 13-22.500H15z" fill="#fbc116" />
      <circle cx="15" cy="15" r="7.500" fill="#fff" /><circle cx="15" cy="15" r="6" fill="#3b7df0" />
    </Svg>,
  ];
  return (
    <footer className="flex h-[59px] shrink-0 items-center bg-[linear-gradient(90deg,#e4dcd8_0%,#e6dcd8_22%,#dedfdf_32%,#dfdfde_70%,#e5dcd8_78%,#e2deda_90%,#e6dcda_100%)] pb-[2px] text-[#1b1b1b]">
      <div className="relative -mt-1 ml-[23px]">
        <WeatherIcon />
        <div className="absolute -top-[2px] left-[16px] flex h-5 w-5 items-center justify-center rounded-full bg-[#c42b1c] text-[12px] leading-none text-white">2</div>
      </div>
      <div className="ml-[7px] text-[14.5px] leading-5">
        <Label w={32}>27°C</Label>
        <Label w={47} className="text-[#5c5957]">Cloudy</Label>
      </div>
      <Svg w={30} h={30} className="ml-[311px]">
        <defs><linearGradient id="win" x1="0" y1="0" x2="1" y2="1"><stop offset="0" stopColor="#45c8fa" /><stop offset="1" stopColor="#0067cc" /></linearGradient></defs>
        <path d="M1 .800h13.500v14H1zM15.500.800H29v14H15.500zM1 15.800h13.500v14H1zM15.500 15.800H29v14H15.500z" fill="url(#win)" />
      </Svg>
      <div className="ml-[17px] flex h-[39px] w-[274px] items-center rounded-full border border-[#cfcfcf] bg-[#f6f6f5] pl-[13px] shadow-[0_1px_1px_#bbb]">
        <Svg w={20} h={20}><circle cx="8.500" cy="8.500" r="7" stroke="#222" strokeWidth="1.900" /><path d="m13.500 13.500 5 5" stroke="#222" strokeWidth="2.400" strokeLinecap="round" /></Svg>
        <Label w={51} className="ml-[11px] text-[16px] leading-6 text-[#5c5c5c]">Search</Label>
        <div className="mt-[3px] ml-[119px]"><Racket /></div>
      </div>
      <div className="ml-[3px] flex">
        {apps.map((a, i) => <div key={i} className="flex h-12 w-[55px] items-center justify-center">{a}</div>)}
      </div>
      <div className="ml-auto flex items-center pr-[24px]">
        <Svg w={14} h={8} className="mr-[22px]"><path d="m1 7 6-6 6 6" stroke="#222" strokeWidth="1.700" /></Svg>
        <Svg w={22} h={18} className="mr-[18px]"><path d="M5.500 15.500a4.500 4.500 0 0 1-.4-9C7 1 15 1 16.500 6.300c6 .7 5.500 9.200 0 9.200z" fill="#b9b6b4" stroke="#222" strokeWidth="1.500" /><path d="m2 1.500 17 16" stroke="#222" strokeWidth="1.700" /></Svg>
        <Svg w={20} h={16} className="mr-[24px]"><rect x=".8" y="1.500" width="18.400" height="13" rx="2" stroke="#222" strokeWidth="1.400" /><path d="M4 5h12M4 8h12" stroke="#222" strokeWidth="1.700" strokeDasharray="1.700 1.700" /><path d="M6 11.500h8" stroke="#222" strokeWidth="1.500" /></Svg>
        <div className="flex w-[28px] flex-col items-center text-[14.5px] leading-5"><Label w={28}>ENG</Label><Label w={18}>US</Label></div>
        <Svg w={22} h={22} className="ml-[22px]"><circle cx="10" cy="10" r="9" stroke="#222" strokeWidth="1.300" /><ellipse cx="10" cy="10" rx="4" ry="9" stroke="#222" strokeWidth="1.200" /><path d="M1.500 7h17M1.500 13h9" stroke="#222" strokeWidth="1.200" /><circle cx="15" cy="15" r="5.500" fill="#e4dedb" stroke="#222" strokeWidth="1.400" /><path d="m11.500 18.500 7-7" stroke="#222" strokeWidth="1.300" /></Svg>
        <Svg w={22} h={20} className="ml-[8px]"><path d="M1.500 7h3.500l4.500-4v14L5 13H1.500z" stroke="#222" strokeWidth="1.400" strokeLinejoin="round" /><path d="M12 7c1.500 2 1.500 4 0 6" stroke="#333" strokeWidth="1.400" /><path d="M14.500 4.500c3 3.500 3 7.500 0 11M17 2.500c4.500 4.500 4.500 10.500 0 15" stroke="#b5afac" strokeWidth="1.400" /></Svg>
        <Svg w={22} h={18} className="ml-[8px]"><rect x="1" y="5" width="17" height="11" rx="2" stroke="#222" strokeWidth="1.500" /><path d="M7.500 7.500h8l-2 6h-9z" fill="#222" /><path d="M19 8.500h1.800v4H19z" fill="#222" /><path d="M4.500 0 1 6h2.500l-1 4.500L7 4H4.500z" fill="#222" stroke="#e4dedb" strokeWidth=".5" /></Svg>
        <div className="ml-[18px] flex w-[79px] flex-col items-end text-[14.5px] leading-5"><Label w={36}>10:19</Label><Label w={78}>25-05-2025</Label></div>
      </div>
    </footer>
  );
}

export default function App() {
  return (
    <div className="flex h-[1080px] w-[1920px] flex-col overflow-hidden bg-[#f7f7f7] font-['Open_Sans','Noto_Sans',sans-serif]">
      <TitleBar />
      <Ribbon />
      <div className="flex min-h-0 flex-1">
        <FeatureTree />
        <Viewport />
      </div>
      <BottomTabs />
      <StatusBar />
      <Taskbar />
    </div>
  );
}
